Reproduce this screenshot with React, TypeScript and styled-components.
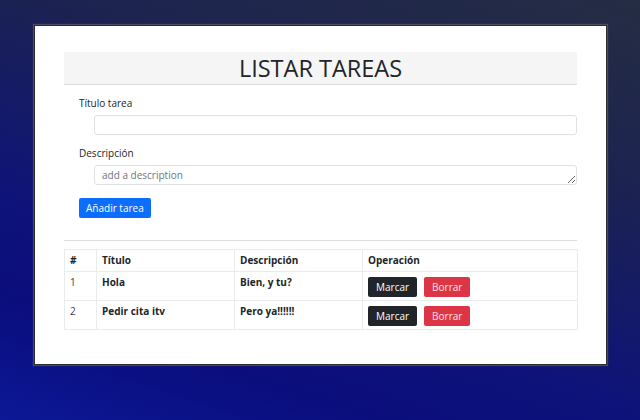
import React from "react";
import styled, { createGlobalStyle } from "styled-components";

const Global = createGlobalStyle`
  *, *::before, *::after { box-sizing: border-box; }
  html, body { margin: 0; padding: 0; }
  body {
    font-family: "Open Sans", "Noto Sans", sans-serif;
    color: #212529;
  }
`;

const Page = styled.div`
  width: 640px;
  height: 420px;
  padding: 25px 0 0 34px;
  background: linear-gradient(198deg, #252d44 0%, #1c2350 30%, #0e137a 65%, #0a0d7c 80%, #0c1896 100%);
`;

const Card = styled.div`
  width: 573px;
  height: 340px;
  background: #fff;
  border: 1px solid #2d2d2d;
  box-shadow: 0 0 1px 1px rgba(110, 110, 110, 0.55);
  padding: 26px 29px 0 29px;
`;

const Header = styled.div`
  height: 33px;
  background: #f5f5f5;
  border-bottom: 1px solid #dcdcdc;
  text-align: center;
  font-size: 23.5px;
  line-height: 32px;
  color: #212529;
`;

const Form = styled.form`
  display: flex;
  flex-direction: column;
  align-items: flex-start;
  padding: 11px 0 0 15px;
`;

const Label = styled.label<{ $gap?: number }>`
  font-size: 10px;
  line-height: 15px;
  color: #212529;
  margin-top: ${(p) => p.$gap ?? 0}px;
`;

const fieldCss = `
  width: 483px;
  height: 20px;
  margin: 4px 0 0 15px;
  border: 1px solid #dee2e6;
  border-radius: 3px;
  font-family: "Open Sans", "Noto Sans", sans-serif;
  font-size: 10px;
  color: #212529;
  padding: 0 7px;
  outline: none;
  background: #fff;
  &::placeholder { color: #6c757d; }
`;

const TextInput = styled.input`
  ${fieldCss}
`;

const TextArea = styled.textarea`
  ${fieldCss}
  line-height: 18px;
  padding-top: 0;
  resize: vertical;
  display: block;
`;

const Button = styled.button<{ $variant: "primary" | "dark" | "danger" }>`
  height: 20px;
  padding: 0 8px;
  border: none;
  border-radius: 2px;
  font-family: "Open Sans", "Noto Sans", sans-serif;
  font-size: 10px;
  line-height: 20px;
  white-space: nowrap;
  cursor: pointer;
  background: ${(p) =>
    p.$variant === "primary" ? "#0d6efd" : p.$variant === "dark" ? "#212529" : "#dc3545"};
  color: ${(p) => (p.$variant === "danger" ? "#fce4e6" : "#fff")};
`;

const SubmitButton = styled(Button)`
  margin-top: 13px;
  padding: 0 7px;
`;

const Divider = styled.hr`
  margin: 22px 0 8px 0;
  border: none;
  border-top: 1px solid #dedede;
  height: 0;
`;

const Table = styled.table`
  width: 513px;
  border-collapse: collapse;
  font-size: 10px;
  table-layout: fixed;
`;

const Th = styled.th<{ $w: number }>`
  width: ${(p) => p.$w}px;
  border: 1px solid #e9ecef;
  text-align: left;
  font-weight: 700;
  padding: 4px 5px 5px 5px;
  line-height: 12px;
  height: 22px;
`;

const Td = styled.td<{ $bold?: boolean }>`
  border: 1px solid #e9ecef;
  vertical-align: top;
  font-weight: ${(p) => (p.$bold ? 700 : 400)};
  color: ${(p) => (p.$bold ? "#212529" : "#3a3f44")};
  padding: 4px 5px 3px 5px;
  line-height: 12px;
  height: 29px;
`;

const Actions = styled.div`
  display: flex;
  gap: 7px;
  margin-top: 1px;
`;

const tasks = [
  { id: 1, title: "Hola", desc: "Bien, y tu?" },
  { id: 2, title: "Pedir cita itv", desc: "Pero ya!!!!!!" },
];

export default function App() {
  return (
    <>
      <Global />
      <Page>
        <Card>
          <Header>LISTAR TAREAS</Header>
          <Form onSubmit={(e) => e.preventDefault()}>
            <Label>Título tarea</Label>
            <TextInput type="text" />
            <Label $gap={11}>Descripción</Label>
            <TextArea placeholder="add a description" rows={1} />
            <SubmitButton $variant="primary">Añadir tarea</SubmitButton>
          </Form>
          <Divider />
          <Table>
            <thead>
              <tr>
                <Th $w={32}>#</Th>
                <Th $w={138}>Título</Th>
                <Th $w={128}>Descripción</Th>
                <Th $w={215}>Operación</Th>
              </tr>
            </thead>
            <tbody>
              {tasks.map((t) => (
                <tr key={t.id}>
                  <Td>{t.id}</Td>
                  <Td $bold>{t.title}</Td>
                  <Td $bold>{t.desc}</Td>
                  <Td>
                    <Actions>
                      <Button $variant="dark">Marcar</Button>
                      <Button $variant="danger">Borrar</Button>
                    </Actions>
                  </Td>
                </tr>
              ))}
            </tbody>
          </Table>
        </Card>
      </Page>
    </>
  );
}
